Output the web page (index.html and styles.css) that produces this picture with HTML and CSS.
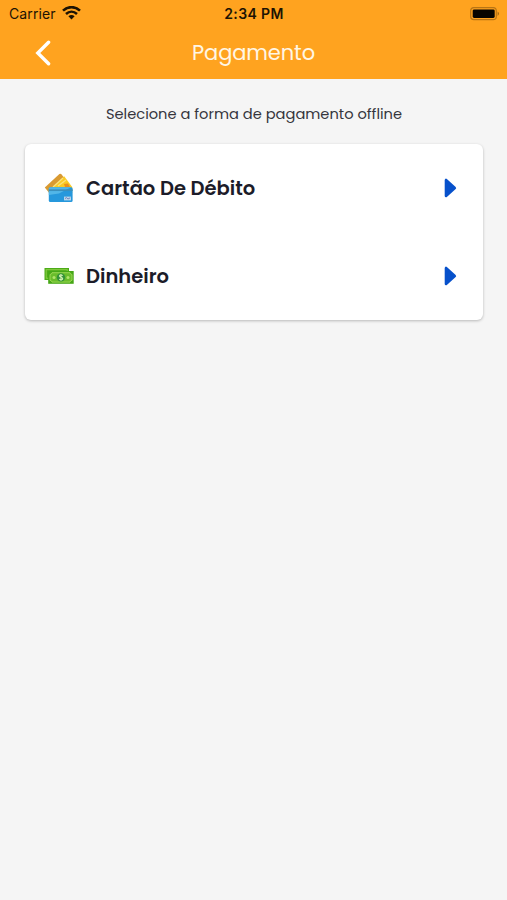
FILE: index.html
```
<!DOCTYPE html>
<html lang="pt-BR">
<head>
    <meta charset="UTF-8">
    <meta name="viewport" content="width=device-width, initial-scale=1.0">
    <title>Pagamento</title>
    <link rel="stylesheet" href="styles.css">
</head>
<body>
    <header class="header">
        <div class="status-bar">
            <div class="carrier">
                <span class="carrier-name">Carrier</span>
                <svg class="wifi" width="19" height="14" viewBox="0 0 19 14">
                    <path d="M1 4.6C6 0 13 0 18 4.6M4 8C7.3 5 11.7 5 15 8" fill="none" stroke="#1d1303" stroke-width="2.6"/>
                    <path d="M6.4 10.3Q9.5 7.9 12.6 10.3L9.5 13.4Z" fill="#1d1303"/>
                </svg>
            </div>
            <span class="time">2:34 PM</span>
            <div class="battery">
                <svg width="30" height="14" viewBox="0 0 30 14">
                    <rect x=".7" y=".7" width="25.6" height="12" rx="3.2" fill="none" stroke="#b87515" stroke-width="1.2"/>
                    <rect x="2.7" y="2.4" width="22" height="8.6" rx="1.4" fill="#080500"/>
                    <path d="M27.6 4.5Q30.4 6.7 27.6 8.9Z" fill="#a56812"/>
                </svg>
            </div>
        </div>
        <div class="nav-bar">
            <button class="back" aria-label="Voltar">
                <svg width="16" height="26" viewBox="0 0 16 26">
                    <path d="M13.6 2.2L2.8 13L13.6 23.8" fill="none" stroke="#fff" stroke-width="3.4" stroke-linecap="round"/>
                </svg>
            </button>
            <h1>Pagamento</h1>
        </div>
    </header>

    <main>
        <p class="hint">Selecione a forma de pagamento offline</p>
        <div class="card">
            <div class="option">
                <svg class="option-icon" width="30" height="30" viewBox="0 0 30 30">
                    <path d="M.8 14.5L15.4 1.1Q16.6.3 17.6 1.5L25 11L9 24.5L6 21Z" fill="#d99a32"/>
                    <path d="M5 18L20.2 3.2L28.2 14V20H7Z" fill="#f9ca25"/>
                    <path d="M9 14L19 5M14 13L22 7" stroke="#fbe27c" stroke-width="1.3"/>
                    <path d="M20 11L24 10.5L26 14H21Z" fill="#e9901c"/>
                    <rect x="4.8" y="14.3" width="23.8" height="14.7" rx="1.5" fill="#2698dc"/>
                    <path d="M4.8 22V15.8Q4.8 14.3 6.3 14.3H27.1L15 20.5Z" fill="#52b6e8"/>
                    <path d="M4.8 17.2H28.6" stroke="#3b8fbb" stroke-width="1.7"/>
                    <rect x="20" y="23.6" width="7" height="3.8" fill="#b7d5eb"/>
                    <path d="M21 25.6L22.4 24.6L24 26L26.2 24.8" fill="none" stroke="#6570ae" stroke-width=".8"/>
                </svg>
                <span class="option-name">Cartão De Débito</span>
                <svg class="arrow" width="13" height="20" viewBox="0 0 13 20">
                    <path d="M2 2V18L10.8 10Z" fill="#0751cb" stroke="#0751cb" stroke-width="2.6" stroke-linejoin="round"/>
                </svg>
            </div>
            <div class="option">
                <svg class="option-icon" width="30" height="30" viewBox="0 0 30 30">
                    <rect x=".5" y="7" width="24.5" height="12" fill="#4cac18"/>
                    <rect x="2.2" y="8.7" width="21" height="8.5" fill="none" stroke="#8bce45"/>
                    <rect x="4.2" y="10" width="25.5" height="12.8" fill="#46a716"/>
                    <path d="M8 11.7H26Q26.2 13.3 28 13.5V19.3Q26.2 19.5 26 21.1H8Q7.8 19.5 6 19.3V13.5Q7.8 13.3 8 11.7Z" fill="#69bd2b" stroke="#a1da59" stroke-width=".9"/>
                    <circle cx="10" cy="16.4" r="1.5" fill="#b1e36c"/>
                    <circle cx="24" cy="16.4" r="1.5" fill="#b1e36c"/>
                    <circle cx="17" cy="16.4" r="4.2" fill="#34923a"/>
                    <path d="M18.8 14.5Q15.5 13.2 15.5 15.1C15.5 16.5 18.7 16 18.7 17.7Q18.6 19.5 15.2 18.3M17 13V19.8" fill="none" stroke="#d4efb2" stroke-width="1.1"/>
                </svg>
                <span class="option-name">Dinheiro</span>
                <svg class="arrow" width="13" height="20" viewBox="0 0 13 20">
                    <path d="M2 2V18L10.8 10Z" fill="#0751cb" stroke="#0751cb" stroke-width="2.6" stroke-linejoin="round"/>
                </svg>
            </div>
        </div>
    </main>
</body>
</html>
```
FILE: styles.css
```
* {
    margin: 0;
    padding: 0;
    box-sizing: border-box;
}

body {
    min-height: 100vh;
    background-color: #f5f5f5;
    font-family: Poppins, Inter, sans-serif;
    color: #1c1c29;
}

.header {
    height: 79px;
    background-color: #ffa31f;
}

.status-bar {
    display: grid;
    grid-template-columns: 1fr auto 1fr;
    align-items: center;
    height: 27px;
    padding: 0 7px 0 9px;
    font-family: Inter, sans-serif;
    color: #1d1303;
}

.carrier {
    display: flex;
    align-items: center;
    gap: 6px;
}

.carrier-name {
    font-size: 14px;
    letter-spacing: 0.1px;
}

.wifi {
    margin-bottom: 2px;
}

.time {
    margin-right: 1px;
    font-size: 14px;
    font-weight: 600;
    letter-spacing: 0.4px;
}

.battery {
    display: flex;
    justify-content: flex-end;
}

.nav-bar {
    display: grid;
    grid-template-columns: 60px 1fr 60px;
    align-items: center;
    height: 51px;
}

.back {
    display: flex;
    justify-content: flex-end;
    padding-right: 9px;
    border: none;
    background: none;
    cursor: pointer;
}

h1 {
    font-size: 21px;
    font-weight: 400;
    letter-spacing: -0.1px;
    text-align: center;
    color: #fff6e5;
}

main {
    padding: 25px 24px 0 25px;
}

.hint {
    margin-bottom: 20px;
    font-size: 14.65px;
    line-height: 20px;
    text-align: center;
    color: #36363d;
}

.card {
    background-color: white;
    border-radius: 6px;
    box-shadow: 0 1px 3px rgba(0, 0, 0, 0.25);
}

.option {
    display: flex;
    align-items: center;
    height: 88px;
    padding: 0 26px 0 19px;
}

.option-name {
    margin-left: 12px;
    font-size: 19.5px;
    font-weight: 600;
}

.arrow {
    margin-left: auto;
}
```
